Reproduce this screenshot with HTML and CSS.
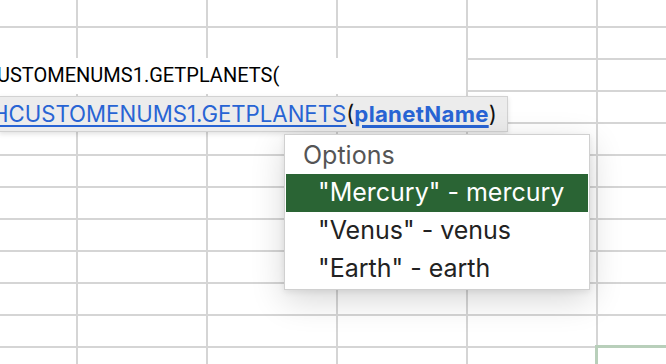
FILE: index.html
```html
<!DOCTYPE html>
<html lang="en">
<head>
  <meta charset="UTF-8" />
  <title>Sheet – custom function options</title>
  <link rel="stylesheet" href="styles.css">
</head>
<body>
  <!-- Hoja con cuadrícula de celdas -->
  <main class="sheet">
    <!-- Celda en edición con la fórmula -->
    <div class="cell-editor">
      <span class="formula">USTOMENUMS1.GETPLANETS(</span>
    </div>

    <!-- Ayuda de la función -->
    <div class="fn-tip">
      <span class="fn-sig"><a class="fn-name" href="#">HCUSTOMENUMS1.GETPLANETS</a>(<a class="fn-arg" href="#">planetName</a>)</span>
    </div>

    <!-- Lista de opciones del argumento -->
    <ul class="options">
      <li class="options-title">Options</li>
      <li class="option active">"Mercury" - mercury</li>
      <li class="option">"Venus" - venus</li>
      <li class="option">"Earth" - earth</li>
    </ul>

    <!-- Celda seleccionada (esquina inferior) -->
    <div class="selection"></div>
  </main>
</body>
</html>
```

FILE: styles.css
```css
/* Reset básico */
*, *::before, *::after {
  box-sizing: border-box;
  margin: 0;
  padding: 0;
}

body {
  width: 666px;
  height: 364px;
  overflow: hidden;
  background: #fff;
  font-family: 'Inter', 'Liberation Sans', sans-serif;
}

/* Cuadrícula: columnas de 130px, filas de 32px */
.sheet {
  position: relative;
  width: 666px;
  height: 364px;
  overflow: hidden;
  background-color: #fff;
  background-image:
    linear-gradient(to right, #d5d5d5 2px, transparent 2px),
    linear-gradient(to bottom, #d5d5d5 2px, transparent 2px);
  background-size: 130px 32px;
  background-position: 76px 26px;
}

/* Celda en edición */
.cell-editor {
  position: absolute;
  top: 58px;
  left: 0;
  width: 466px;
  height: 36px;
  background: #fff;
  overflow: hidden;
  white-space: nowrap;
}
.formula {
  display: block;
  margin-left: -3px;
  font-family: 'Roboto', 'Liberation Sans', sans-serif;
  font-size: 20px;
  line-height: 35px;
  color: #000;
}

/* Tooltip con la firma de la función */
.fn-tip {
  position: absolute;
  top: 96px;
  left: -1px;
  width: 509px;
  height: 36px;
  background: #ececec;
  border: 1px solid #d2d2d2;
  box-shadow: 0 2px 5px rgba(0, 0, 0, .12);
  font-size: 22.2px;
  line-height: 33px;
  color: #111;
  white-space: nowrap;
  overflow: hidden;
}
.fn-sig {
  display: block;
  margin-left: -8px;
}
.fn-tip a {
  color: #2864d4;
  text-decoration: underline;
  text-underline-offset: 3px;
  text-decoration-thickness: 1.5px;
}
.fn-tip a.fn-arg {
  font-weight: 700;
  letter-spacing: .3px;
  text-decoration-thickness: 3px;
}

/* Menú de opciones */
.options {
  position: absolute;
  top: 134px;
  left: 284px;
  width: 306px;
  padding: 0 1px 1px;
  list-style: none;
  background: #fff;
  border: 1px solid #d0d0d0;
  box-shadow: 0 10px 32px rgba(0, 0, 0, .16), 0 2px 6px rgba(0, 0, 0, .08);
  font-size: 25px;
  white-space: nowrap;
}
.options-title {
  height: 39px;
  padding-left: 17px;
  line-height: 40px;
  color: #555;
}
.option {
  height: 38px;
  padding-left: 32px;
  line-height: 37px;
  color: #222;
}
.option.active {
  background: #2a6434;
  color: #fff;
}

/* Borde verde de la celda seleccionada */
.selection {
  position: absolute;
  top: 345px;
  left: 595px;
  width: 100px;
  height: 40px;
  border: 3px solid #b8cfba;
}
```
